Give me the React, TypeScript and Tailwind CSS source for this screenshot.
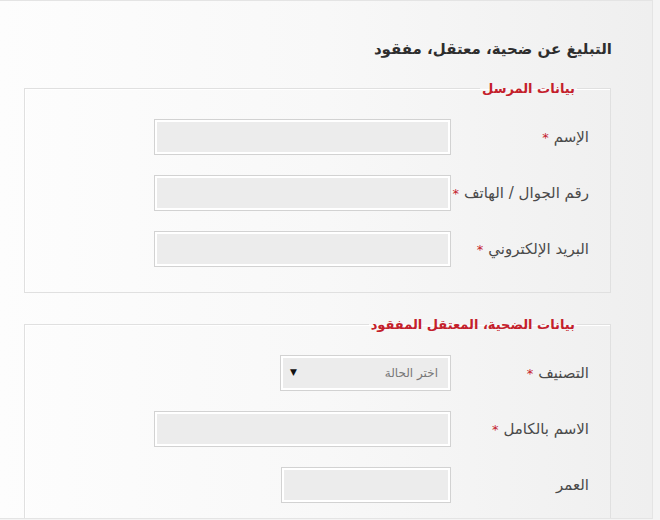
import React from "react";

type Field = {
  label: string;
  required?: boolean;
  width: string;
  select?: boolean;
};

const senderFields: Field[] = [
  { label: "الإسم", required: true, width: "w-[297px]" },
  { label: "رقم الجوال / الهاتف", required: true, width: "w-[297px]" },
  { label: "البريد الإلكتروني", required: true, width: "w-[297px]" },
];

const victimFields: Field[] = [
  { label: "التصنيف", required: true, width: "w-[171px]", select: true },
  { label: "الاسم بالكامل", required: true, width: "w-[297px]" },
  { label: "العمر", width: "w-[170px]" },
];

function Row({ field }: { field: Field }) {
  return (
    <div className="flex items-center h-[36px]">
      <label className="w-[138px] text-[15px] text-[#4a4a4a] leading-none">
        {field.label}
        {field.required && <span className="text-[#c4202b] text-[13px] mr-[5px]">*</span>}
      </label>
      {field.select ? (
        <div className={`${field.width} h-[36px] border border-[#d2d2d2] bg-[#ececec] shadow-[inset_0_0_0_2px_#fff] flex items-center justify-between pr-[12px] pl-[9px]`}>
          <span className="text-[12px] text-[#777]">اختر الحالة</span>
          <span className="text-[9px] text-[#111]">▼</span>
        </div>
      ) : (
        <div className={`${field.width} h-[36px] border border-[#d2d2d2] bg-[#ececec] shadow-[inset_0_0_0_2px_#fff]`} />
      )}
    </div>
  );
}

function Section({ title, fields, className }: { title: string; fields: Field[]; className?: string }) {
  return (
    <fieldset className={`border border-[#e0e0e0] shadow-[inset_1px_1px_0_#fff] mr-[41px] ml-[24px] pr-[21px] pl-0 ${className ?? ""}`}>
      <legend className="mr-[12px] px-[2px] text-[13px] font-bold text-[#c4202b] leading-none">{title}</legend>
      <div className="flex flex-col gap-[20px]">
        {fields.map((f, i) => (
          <Row key={i} field={f} />
        ))}
      </div>
    </fieldset>
  );
}

export default function App() {
  return (
    <div
      dir="rtl"
      className="w-[660px] h-[520px] overflow-hidden bg-[#f4f4f4]"
      style={{ fontFamily: '"DejaVu Sans", sans-serif' }}
    >
      <div className="w-[653px] h-[519px] ml-auto mr-[7px] border-t border-r border-b border-[#e4e4e4] bg-gradient-to-l from-[#efefef] via-[#f8f8f8] to-[#fdfdfd] overflow-hidden">
        <h1 className="mr-[40px] mt-[37px] text-[15px] font-bold text-[#2e2e2e] leading-[22px]">
          التبليغ عن ضحية، معتقل، مفقود
        </h1>
        <Section title="بيانات المرسل" fields={senderFields} className="mt-[22px] pt-[24px] pb-[25px]" />
        <Section title="بيانات الضحية، المعتقل المفقود" fields={victimFields} className="mt-[25px] pt-[24px] pb-[40px]" />
      </div>
    </div>
  );
}
